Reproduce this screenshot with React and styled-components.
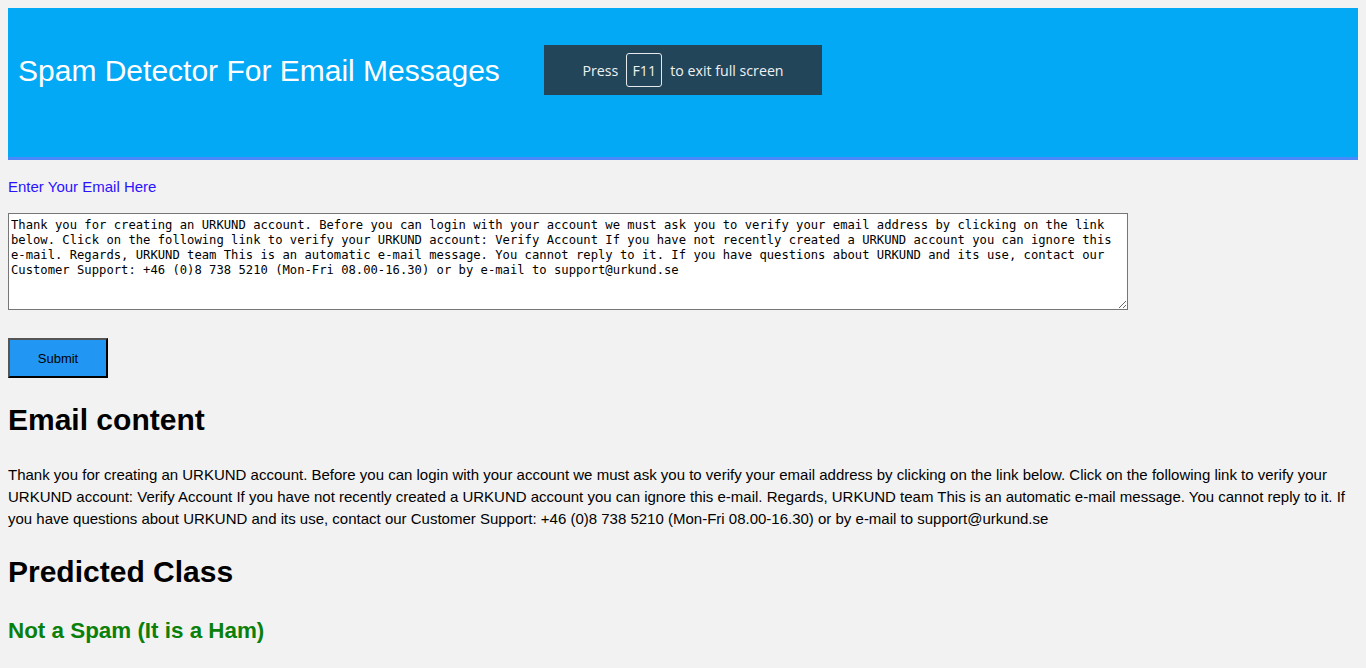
import styled, { createGlobalStyle } from "styled-components";

const emailText =
  "Thank you for creating an URKUND account. Before you can login with your account we must ask you to verify your email address by clicking on the link below. Click on the following link to verify your URKUND account: Verify Account If you have not recently created a URKUND account you can ignore this e-mail. Regards, URKUND team This is an automatic e-mail message. You cannot reply to it. If you have questions about URKUND and its use, contact our Customer Support: +46 (0)8 738 5210 (Mon-Fri 08.00-16.30) or by e-mail to support@urkund.se";

const GlobalStyle = createGlobalStyle`
  body {
    margin: 8px;
    background: #f2f2f2;
    font-family: "Liberation Sans", Arial, sans-serif;
    color: #000;
  }
`;

function App() {
  return (
    <Page>
      <GlobalStyle />
      <Header>
        <Title>Spam Detector For Email Messages</Title>
        <FullScreenToast>
          Press <Key>F11</Key> to exit full screen
        </FullScreenToast>
      </Header>

      <Label htmlFor="email">Enter Your Email Here</Label>
      <EmailBox id="email" defaultValue={emailText} />

      <SubmitButton type="button">Submit</SubmitButton>

      <Heading $gap={25}>Email content</Heading>
      <Content>{emailText}</Content>

      <Heading $gap={25}>Predicted Class</Heading>
      <Result>Not a Spam (It is a Ham)</Result>
    </Page>
  );
}

export default App;

const Page = styled.div`
  display: flex;
  flex-direction: column;
  align-items: flex-start;
`;

const Header = styled.header`
  position: relative;
  align-self: stretch;
  height: 149px;
  padding: 0 10px;
  background: #03a9f4;
  border-bottom: 3px solid #4b89fb;
`;

const Title = styled.h1`
  margin: 0;
  padding-top: 46px;
  font-size: 30px;
  font-weight: normal;
  color: #fff;
`;

const FullScreenToast = styled.div`
  position: absolute;
  left: 536px;
  top: 37px;
  width: 278px;
  height: 50px;
  display: flex;
  align-items: center;
  justify-content: center;
  gap: 8px;
  background: #234559;
  color: #eef1f3;
  font-family: "Open Sans", "Noto Sans", sans-serif;
  font-size: 14.2px;
`;

const Key = styled.span`
  display: inline-flex;
  align-items: center;
  justify-content: center;
  width: 36px;
  height: 34px;
  border: 1px solid #e6e9ec;
  border-radius: 3px;
  box-sizing: border-box;
`;

const Label = styled.label`
  display: block;
  margin: 18px 0 18px;
  font-size: 15px;
  color: #2a12ff;
`;

const EmailBox = styled.textarea`
  box-sizing: border-box;
  width: 1120px;
  height: 97px;
  padding: 4px 2px 2px;
  border: 1px solid #767676;
  background: #fff;
  font-family: "DejaVu Sans Mono", monospace;
  font-size: 12.2px;
  line-height: 15px;
  color: #000;
`;

const SubmitButton = styled.button`
  margin-top: 28px;
  width: 100px;
  height: 40px;
  background: #2196f3;
  border: 2px outset #555;
  font-family: "Liberation Sans", Arial, sans-serif;
  font-size: 13px;
  color: #000;
`;

const Heading = styled.h2`
  margin: ${(p) => p.$gap}px 0 0;
  font-size: 30px;
  font-weight: bold;
`;

const Content = styled.p`
  margin: 27px 0 0;
  font-size: 15px;
  line-height: 22px;
`;

const Result = styled.h3`
  margin: 29px 0 0;
  font-size: 22.4px;
  font-weight: bold;
  color: #0a800a;
`;
